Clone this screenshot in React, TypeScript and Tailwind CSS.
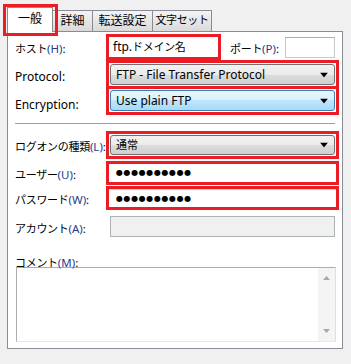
import React from "react";

const RED = "border-[#ec1c24]";

function Lbl({ text, key2, latin }: { text: string; key2?: string; latin?: boolean }) {
  return (
    <span
      className={`whitespace-nowrap leading-[14px] text-black ${
        latin ? "text-[12px]" : "text-[11px] tracking-[-0.3px]"
      }`}
    >
      {text}
      {key2 && <span className="text-[11.5px] tracking-normal text-[#1f3b8f]">({key2})</span>}
      <span className={latin ? "" : "text-[11.5px] tracking-normal"}>:</span>
    </span>
  );
}

function Arrow() {
  return (
    <svg width="8" height="5" viewBox="0 0 8 5" className="absolute right-[6px] top-1/2 -translate-y-1/2">
      <path d="M0 0 H8 L4 5 Z" fill="#000" />
    </svg>
  );
}

function GraySelect({ text, h, cls }: { text: string; h: string; cls?: string }) {
  return (
    <div
      className={`relative flex items-center rounded-[3px] border border-[#707070] pl-[5px] text-black ${h} ${cls ?? "text-[12px]"}`}
      style={{ background: "linear-gradient(#f2f2f2 0%, #ebebeb 50%, #dddddd 50%, #cfcfcf 100%)" }}
    >
      {text}
      <Arrow />
    </div>
  );
}

const tabCls =
  "flex h-[22px] items-center justify-center whitespace-nowrap border border-l-0 border-[#898c95] bg-gradient-to-b from-[#f4f4f4] to-[#dadada] pb-[1px] text-black";

export default function App() {
  return (
    <div className="relative h-[364px] w-[351px] overflow-hidden bg-[#f0f0f0] pl-[7px] pt-[7px] font-['Noto_Sans','Noto_Sans_CJK_JP',sans-serif]">
      {/* tabs */}
      <div className="flex h-[25px] items-end">
        <div className="relative z-10 flex h-[25px] w-[46px] items-center justify-center border border-b-0 border-[#898c95] bg-white pb-[2px] text-[12px] text-black">
          一般
        </div>
        <div className={`${tabCls} w-[40px] text-[12px]`}>詳細</div>
        <div className={`${tabCls} w-[60px] text-[12px]`}>転送設定</div>
        <div className={`${tabCls} w-[59px] text-[11px] tracking-[-0.4px]`}>文字セット</div>
      </div>

      {/* panel */}
      <div className="-mt-px h-[318px] w-[336px] border border-[#898c95] bg-white pl-[7px] pt-[2px]">
        {/* host row */}
        <div className="flex h-[26px] items-center">
          <div className="w-[91px]">
            <Lbl text="ホスト" key2="H" />
          </div>
          <div className={`flex h-[26px] w-[115px] items-center whitespace-nowrap border-[3px] ${RED} bg-white pl-[4px] text-black`}>
            <span className="text-[12px]">ftp.</span>
            <span className="text-[11px] tracking-[-0.3px]">ドメイン名</span>
          </div>
          <div className="ml-[9px] w-[55px]">
            <Lbl text="ポート" key2="P" />
          </div>
          <div className="h-[21px] w-[50px] border border-[#c5c8cc] border-t-[#abadb3] bg-white" />
        </div>

        {/* protocol */}
        <div className="flex h-[29px] items-center">
          <div className="w-[91px] pt-[1px]">
            <Lbl text="Protocol" latin />
          </div>
          <div className={`h-[29px] w-[233px] border-[3px] ${RED} p-px`}>
            <GraySelect text="FTP - File Transfer Protocol" h="h-[21px]" />
          </div>
        </div>
        {/* encryption */}
        <div className="flex h-[26px] items-center">
          <div className="w-[91px] pt-[1px]">
            <Lbl text="Encryption" latin />
          </div>
          <div className={`h-[26px] w-[233px] border-[3px] border-t-0 ${RED} p-px`}>
            <div
              className="relative flex h-[21px] items-center rounded-[3px] border border-[#3c7fb1] pl-[5px] text-[12px] text-black"
              style={{ background: "linear-gradient(#eaf6fd 0%, #d9f0fc 50%, #bee6fd 50%, #a7d9f5 100%)" }}
            >
              Use plain FTP
              <Arrow />
            </div>
          </div>
        </div>

        {/* separator */}
        <div className="mt-[8px] w-[320px] border-t border-b border-t-[#a0a0a0] border-b-white" />

        {/* logon */}
        <div className="mt-[6px] flex h-[28px] items-center">
          <div className="w-[91px]">
            <Lbl text="ログオンの種類" key2="L" />
          </div>
          <div className={`h-[28px] w-[233px] border-[3px] ${RED} p-px`}>
            <GraySelect text="通常" h="h-[20px]" cls="text-[11px]" />
          </div>
        </div>

        {/* user */}
        <div className="mt-[2px] flex h-[24px] items-center">
          <div className="w-[91px]">
            <Lbl text="ユーザー" key2="U" />
          </div>
          <div className={`flex h-[24px] w-[233px] items-center border-[3px] ${RED} bg-white pl-[7px]`}>
            <span className="font-['DejaVu_Sans',sans-serif] text-[8px] tracking-[0.6px] text-black">●●●●●●●●●●</span>
          </div>
        </div>

        {/* password */}
        <div className="mt-px flex h-[24px] items-center">
          <div className="w-[91px]">
            <Lbl text="パスワード" key2="W" />
          </div>
          <div className={`h-[24px] w-[233px] border-[3px] ${RED} bg-white`}>
            <div className="flex h-full items-center border-t border-[#b6d9ef] pl-[7px]">
              <span className="font-['DejaVu_Sans',sans-serif] text-[8px] tracking-[0.6px] text-black">●●●●●●●●●●</span>
            </div>
          </div>
        </div>

        {/* account */}
        <div className="mt-[6px] flex h-[21px] items-center">
          <div className="w-[95px]">
            <Lbl text="アカウント" key2="A" />
          </div>
          <div className="h-[21px] w-[225px] border border-[#adb2b5] bg-[#f0f0f0]" />
        </div>

        {/* comment */}
        <div className="mt-[12px] h-[14px]">
          <Lbl text="コメント" key2="M" />
        </div>
        <div className="ml-px mt-[4px] flex h-[75px] w-[320px] border border-[#abadb3] border-b-[#e3e9ef] border-r-[#dbdfe6] bg-white">
          <div className="flex-1" />
          <div className="flex h-full w-[17px] flex-col items-center justify-between bg-[#f4f4f4] py-[8px]">
            <svg width="7" height="4" viewBox="0 0 7 4">
              <path d="M0 4 L3.5 0 L7 4 Z" fill="#a8a8a8" />
            </svg>
            <svg width="7" height="4" viewBox="0 0 7 4">
              <path d="M0 0 L7 0 L3.5 4 Z" fill="#a8a8a8" />
            </svg>
          </div>
        </div>
      </div>

      {/* red highlight over selected tab */}
      <div className={`pointer-events-none absolute left-[3px] top-[4px] z-20 h-[32px] w-[55px] border-[3px] ${RED}`} />
    </div>
  );
}
